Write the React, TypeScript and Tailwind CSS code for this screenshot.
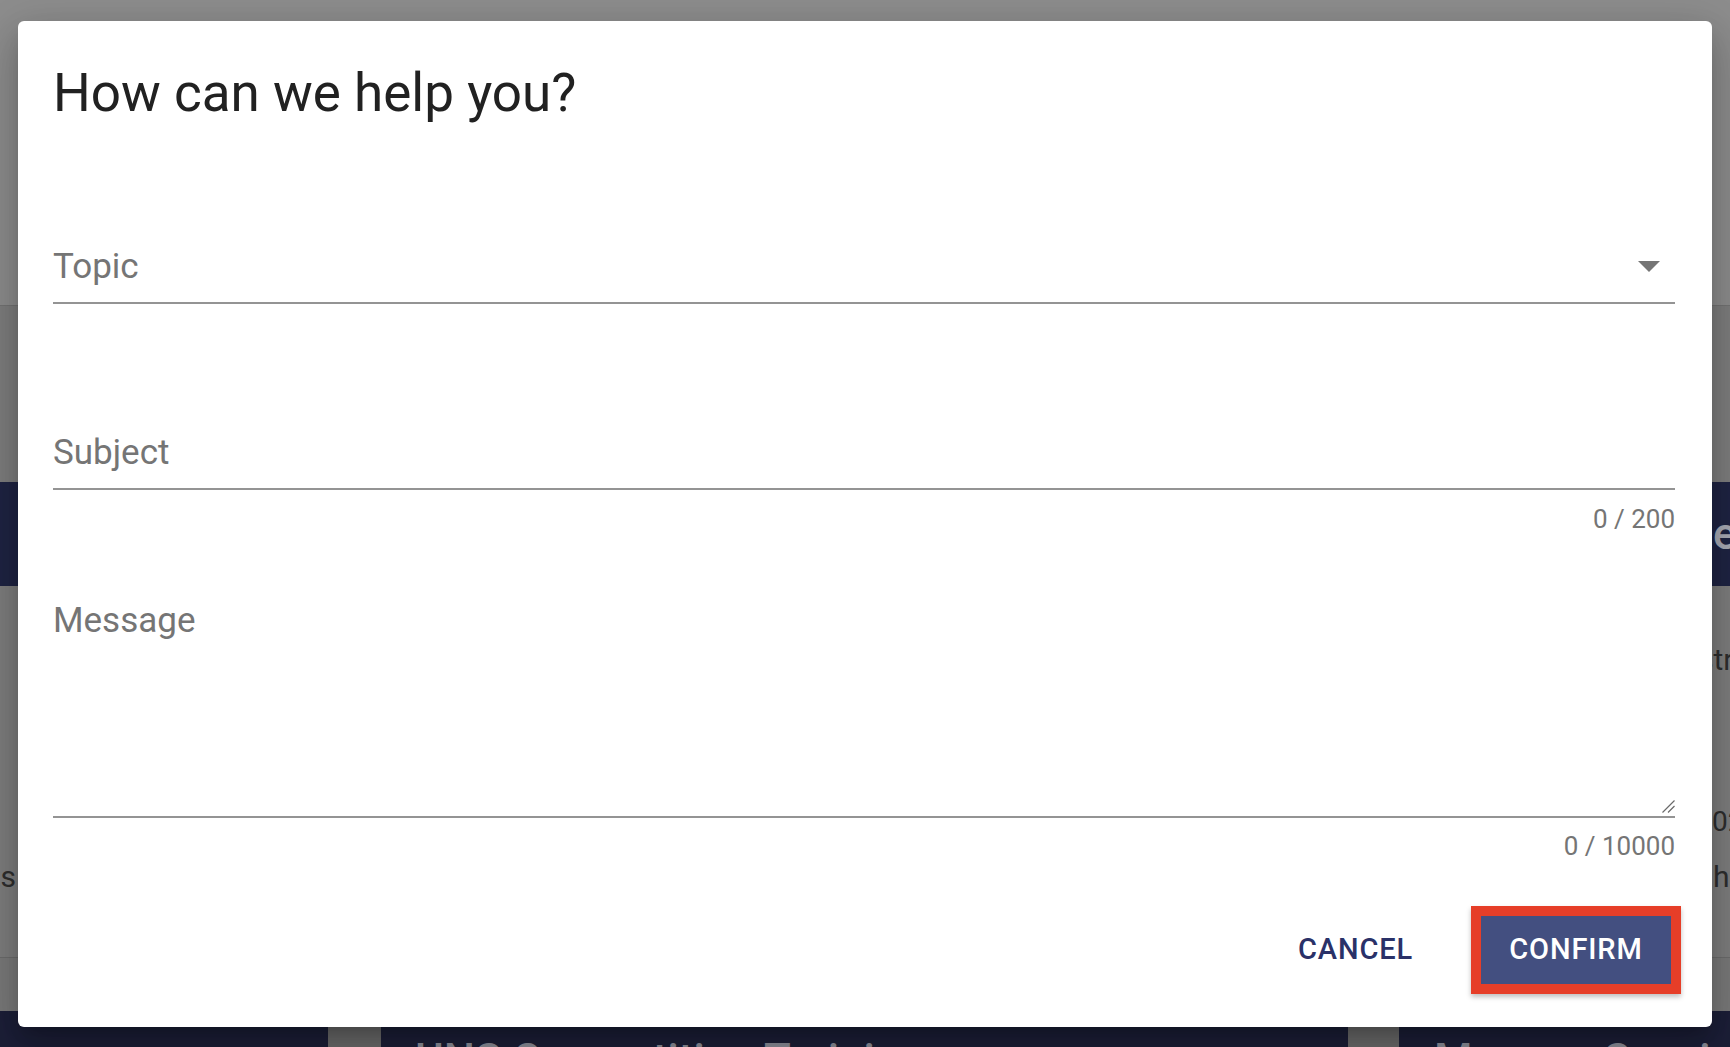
import React from 'react';

const Field: React.FC<{ label: string; select?: boolean }> = ({ label, select }) => (
  <div className="flex items-center border-b-2 border-[#949494] pb-[15px]">
    <span className="flex-1 text-[35px] leading-[40px] text-[#757575]">{label}</span>
    {select && (
      <svg width="22" height="11" viewBox="0 0 22 11" className="mr-[15px]">
        <path d="M0 0 L22 0 L11 11 Z" fill="#757575" />
      </svg>
    )}
  </div>
);

const Counter: React.FC<{ text: string; className?: string }> = ({ text, className }) => (
  <div className={`text-right text-[26px] leading-[30px] text-[#757575] ${className ?? ''}`}>{text}</div>
);

const App: React.FC = () => {
  return (
    <div className="relative h-[1047px] w-[1730px] overflow-hidden bg-[#7e7e7e] font-['Roboto',sans-serif]">
      {/* dimmed page behind the dialog */}
      <div className="flex h-full flex-col">
        <div className="h-[306px] border-b border-[#737373] bg-[#8d8d8d]" />
        <div className="h-[176px]" />
        <div className="flex h-[104px] items-center bg-[#1f2443] pl-[1713px] text-[44px] font-medium text-[#a9abb5]">e</div>
        <div className="h-[54px]" />
        <div className="h-[40px] whitespace-nowrap pl-[1698px] text-[30px] leading-[40px] text-[#2e2e2e]">str</div>
        <div className="h-[122px]" />
        <div className="h-[40px] whitespace-nowrap pl-[1712px] text-[28px] leading-[40px] text-[#2e2e2e]">02</div>
        <div className="h-[15px]" />
        <div className="flex h-[40px] text-[30px] leading-[40px] text-[#2e2e2e]">
          <div className="flex w-[16px] justify-end whitespace-nowrap">ts</div>
          <span className="ml-[1697px] whitespace-nowrap">h</span>
        </div>
        <div className="h-[60px]" />
        <div className="h-[54px] border-t border-[#6c6c6c] bg-[#7a7a7a]" />
        <div className="flex h-[36px]">
          <div className="w-[328px] bg-[#1c1f38]" />
          <div className="w-[53px] bg-[#6b6b6b]" />
          <div className="flex-1 overflow-hidden whitespace-nowrap bg-[#1c1f38] pl-[34px] pt-[27px] text-[44px] font-medium leading-none text-[#8b8d98]">UNS Competition Training</div>
          <div className="w-[51px] bg-[#6b6b6b]" />
          <div className="w-[331px] overflow-hidden whitespace-nowrap bg-[#1c1f38] pl-[35px] pt-[27px] text-[44px] font-medium leading-none text-[#8b8d98]">Manage Sessions</div>
        </div>
      </div>

      {/* dialog */}
      <div className="absolute inset-0 flex items-center justify-center">
        <div className="flex h-[1006px] w-[1694px] flex-col rounded-[6px] bg-white pb-[33px] pl-[35px] pr-[37px] pt-[42px] shadow-[0_11px_15px_-7px_rgba(0,0,0,0.2),0_24px_38px_3px_rgba(0,0,0,0.14),0_9px_46px_8px_rgba(0,0,0,0.12)]">
          <h2 className="text-[53px] font-normal leading-[60px] text-[#212121]">How can we help you?</h2>

          <div className="mt-[124px]">
            <Field label="Topic" select />
          </div>

          <div className="mt-[129px]">
            <Field label="Subject" />
          </div>
          <Counter text="0 / 200" className="mt-[14px]" />

          <div className="mt-[67px] flex h-[217px] flex-col border-b-2 border-[#949494] pb-[3px]">
            <span className="text-[35px] leading-[40px] text-[#757575]">Message</span>
            <div className="flex-1" />
            <svg width="13" height="13" viewBox="0 0 13 13" className="self-end">
              <path d="M12.5 0.5 L0.5 12.5 M12.5 6 L6 12.5" stroke="#6a6a6a" strokeWidth="1.2" />
            </svg>
          </div>
          <Counter text="0 / 10000" className="mt-[13px]" />

          <div className="-mr-[6px] mt-[45px] flex items-center justify-end">
            <button className="mr-[58px] text-[29px] font-medium uppercase tracking-[0.03em] text-[#2a3168]">Cancel</button>
            <div className="flex h-[88px] w-[210px] border-[10px] border-[#e63e28] shadow-[0_3px_5px_rgba(0,0,0,0.25)]">
              <button className="flex flex-1 items-center justify-center bg-[#434f80] text-[29px] font-medium uppercase tracking-[0.03em] text-white">Confirm</button>
            </div>
          </div>
        </div>
      </div>
    </div>
  );
};

export default App;
